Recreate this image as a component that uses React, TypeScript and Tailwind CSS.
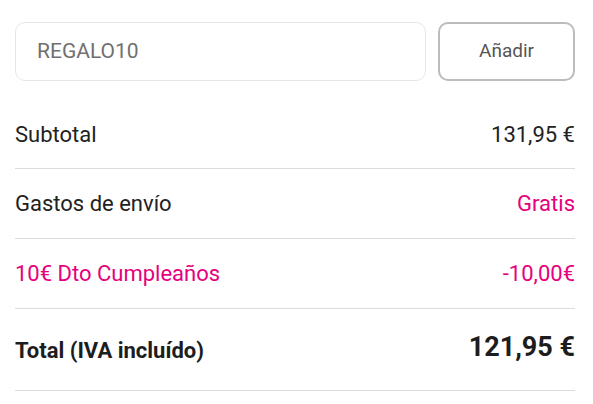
import React from "react";

export default function App() {
  const font = { fontFamily: "Roboto, 'Liberation Sans', sans-serif" };
  return (
    <div className="w-[593px] h-[404px] bg-white overflow-hidden" style={font}>
      <div className="pl-[15px] pr-[18px] pt-[22px]">
        <div className="flex gap-[12px]">
          <div className="flex-1 h-[59px] rounded-[10px] border border-[#e6e6e6] flex items-center pl-[21px] text-[21px] text-[#707070]">
            REGALO10
          </div>
          <button className="w-[137px] h-[59px] rounded-[10px] border-2 border-[#bcbcbc] text-[19px] text-[#555] bg-white">
            Añadir
          </button>
        </div>
        <div className="mt-[18px]">
          <div className="h-[70px] flex items-center justify-between border-b border-[#dcdcdc] text-[22px] text-[#222] pt-[1px]">
            <span>Subtotal</span>
            <span>131,95 €</span>
          </div>
          <div className="h-[70px] flex items-center justify-between border-b border-[#dcdcdc] text-[22px] text-[#222]">
            <span>Gastos de envío</span>
            <span className="text-[#e6007e]">Gratis</span>
          </div>
          <div className="h-[70px] flex items-center justify-between border-b border-[#dcdcdc] text-[22px] text-[#e6007e]">
            <span>10€ Dto Cumpleaños</span>
            <span>-10,00€</span>
          </div>
          <div className="h-[82px] flex items-center justify-between border-b border-[#dcdcdc] text-[#1d1d1d] font-bold">
            <span className="text-[22px] mt-[1px]">Total (IVA incluído)</span>
            <span className="text-[27px] -mt-[4px]">121,95 €</span>
          </div>
        </div>
      </div>
    </div>
  );
}
